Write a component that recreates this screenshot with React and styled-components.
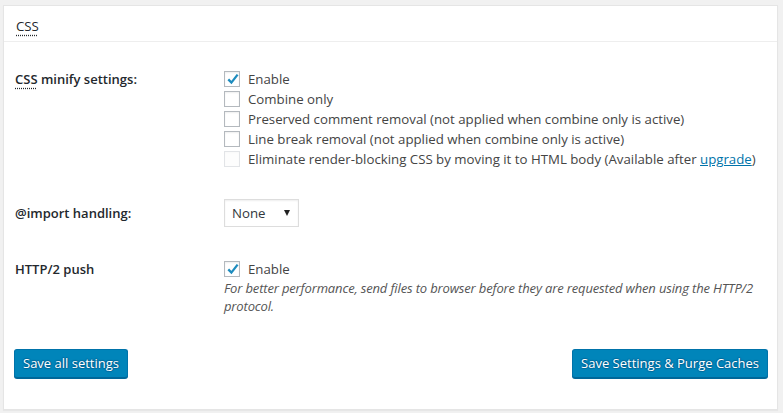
import React from "react";
import styled, { createGlobalStyle, css } from "styled-components";

const GlobalStyle = createGlobalStyle`
    html, body {
        margin: 0;
        padding: 0;
        background: #f1f1f1;
    }
    body {
        font-family: "Open Sans", "Liberation Sans", sans-serif;
        font-size: 13px;
        color: #444;
    }
`;

const Panel = styled.div`
    margin: 5px 5px 4px 3px;
    background: #fff;
    border: 1px solid #e5e5e5;
    box-shadow: 0 1px 1px rgba(0, 0, 0, 0.04);
`;

const PanelHeader = styled.h2`
    margin: 0;
    padding: 11px 12px 6px;
    font-size: 13.25px;
    font-weight: 400;
    line-height: 18px;
    color: #23282d;
    border-bottom: 1px solid #eee;
`;

const Abbr = styled.abbr`
    text-decoration: underline dotted #23282d;
    text-underline-offset: 4px;
    cursor: help;
`;

const Section = styled.div`
    padding: 12px 1px 0 11px;
`;

const Row = styled.div`
    display: flex;
    padding: 15px 0 ${(props) => props.bottom || 15}px;
    ${(props) => props.center && css`
        align-items: center;
    `}
`;

const Label = styled.div`
    width: 209px;
    flex-shrink: 0;
    font-weight: 600;
    line-height: 20px;
    color: #23282d;
`;

const Field = styled.div`
    flex: 1;
    font-size: 13.25px;
    line-height: 20px;
`;

const CheckRow = styled.label`
    display: flex;
    align-items: center;
    gap: 8px;
    height: 20px;
    color: #444;
`;

const Box = styled.span`
    position: relative;
    width: 16px;
    height: 16px;
    box-sizing: border-box;
    flex-shrink: 0;
    border: 1px solid ${(props) => (props.disabled ? "#e2e4e7" : "#b4b9be")};
    background: ${(props) => (props.disabled ? "#fdfdfd" : "#fff")};
    box-shadow: inset 0 1px 2px rgba(0, 0, 0, ${(props) => (props.disabled ? 0.02 : 0.07)});
    svg {
        position: absolute;
        left: 1px;
        top: 0px;
    }
`;

const Link = styled.a`
    color: #0073aa;
    text-decoration: underline;
`;

const Select = styled.div`
    display: flex;
    align-items: center;
    justify-content: space-between;
    box-sizing: border-box;
    width: 75px;
    height: 28px;
    padding: 0 8px 0 7px;
    border: 1px solid #ddd;
    box-shadow: inset 0 1px 2px rgba(0, 0, 0, 0.07);
    color: #32373c;
    background: #fff;
`;

const Arrow = styled.span`
    width: 0;
    height: 0;
    border-left: 3.5px solid transparent;
    border-right: 3.5px solid transparent;
    border-top: 6px solid #222;
`;

const Description = styled.p`
    margin: 0;
    font-size: 13px;
    font-style: italic;
    letter-spacing: -0.15px;
    line-height: 18px;
    color: #555;
`;

const Footer = styled.div`
    display: flex;
    justify-content: space-between;
    padding: 19px 9px 31px 10px;
`;

const Button = styled.button`
    height: 29px;
    padding: 0 8px 1px;
    font-family: inherit;
    font-size: 13px;
    color: #fff;
    background: #0085ba;
    border: 1px solid #0073aa;
    border-bottom-color: #006799;
    border-radius: 3px;
    box-shadow: 0 1px 0 #006799;
    text-shadow: 0 -1px 1px #006799, 1px 0 1px #006799, 0 1px 1px #006799, -1px 0 1px #006799;
    cursor: pointer;
`;

function Checkbox({ checked, disabled, children }) {
    return (
        <CheckRow>
            <Box disabled={disabled}>
                {checked && (
                    <svg width="14" height="14" viewBox="0 0 14 14">
                        <path d="M2.3 7.4 L5.4 10.6 L11.6 2.6" fill="none" stroke="#1e8cbe" strokeWidth="2.3" />
                    </svg>
                )}
            </Box>
            <span>{children}</span>
        </CheckRow>
    );
}

export default function App() {
    return (
        <>
            <GlobalStyle />
            <Panel>
                <PanelHeader>
                    <Abbr title="Cascading Style Sheets">CSS</Abbr>
                </PanelHeader>
                <Section>
                    <Row>
                        <Label>
                            <Abbr title="Cascading Style Sheets">CSS</Abbr> minify settings:
                        </Label>
                        <Field>
                            <Checkbox checked>Enable</Checkbox>
                            <Checkbox>Combine only</Checkbox>
                            <Checkbox>Preserved comment removal (not applied when combine only is active)</Checkbox>
                            <Checkbox>Line break removal (not applied when combine only is active)</Checkbox>
                            <Checkbox disabled>
                                Eliminate render-blocking CSS by moving it to HTML body (Available after <Link href="#">upgrade</Link>)
                            </Checkbox>
                        </Field>
                    </Row>
                    <Row center bottom={17}>
                        <Label>@import handling:</Label>
                        <Field>
                            <Select>
                                <span>None</span>
                                <Arrow />
                            </Select>
                        </Field>
                    </Row>
                    <Row>
                        <Label>HTTP/2 push</Label>
                        <Field>
                            <Checkbox checked>Enable</Checkbox>
                            <Description>
                                For better performance, send files to browser before they are requested when using the HTTP/2 protocol.
                            </Description>
                        </Field>
                    </Row>
                </Section>
                <Footer>
                    <Button>Save all settings</Button>
                    <Button>Save Settings &amp; Purge Caches</Button>
                </Footer>
            </Panel>
        </>
    );
}
